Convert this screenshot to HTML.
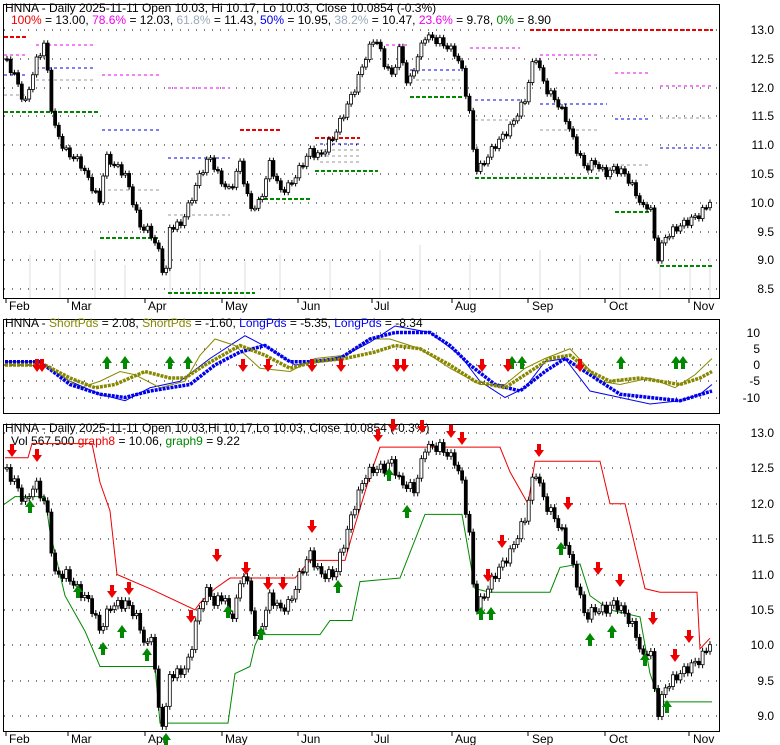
<!DOCTYPE html>
<html><head><meta charset="utf-8"><style>
body{margin:0;background:#fff;width:780px;height:745px;overflow:hidden}
svg{display:block;font-family:"Liberation Sans",sans-serif;font-size:12px}
.g{stroke:#000;stroke-width:1;stroke-dasharray:1,7;fill:none}
</style></head><body>
<svg id="s" width="780" height="745" viewBox="0 0 780 745">
<defs>
<path id="ua" d="M0 0l-5 7h3v6h4v-6h3z" fill="#080"/>
<path id="da" d="M0 0l-5 -7h3v-6h4v6h3z" fill="#e00"/>
</defs>
<rect width="780" height="745" fill="#fff"/>
<rect x="3.5" y="4.5" width="716" height="294" fill="none" stroke="#000"/>
<rect x="3.5" y="319.5" width="716" height="94" fill="none" stroke="#000"/>
<rect x="3.5" y="424.5" width="716" height="307" fill="none" stroke="#000"/>
<g class="g">
<path d="M4 30H719M4 59H719M4 88H719M4 116H719M4 145H719M4 174H719M4 203H719M4 232H719M4 260H719M4 289H719"/>
<path d="M4 333H719M4 349H719M4 365H719M4 381H719M4 398H719"/>
<path d="M4 433H719M4 468H719M4 504H719M4 539H719M4 575H719M4 610H719M4 645H719M4 681H719M4 716H719"/>
</g>
<g stroke="#eee" stroke-width="2">
<path d="M30 298V255M60 298V262M95 298V250M125 298V265M170 298V240M200 298V258M245 298V262M280 298V255M330 298V260M380 298V250M420 298V245M470 298V255M500 298V262M540 298V250M580 298V255M620 298V262M660 298V240M690 298V265M710 298V258"/>
</g>
<g stroke-width="2" stroke-dasharray="4,2" fill="none">
<path d="M4 37H28M240 130H280M315 138H360M530 30H713" stroke="#e00"/>
<path d="M4 112H98M100 238H158M168 293H255M258 199H310M315 171H378M410 97H463M475 178H600M615 212H650M660 266H713" stroke="#080"/>
</g>
<g stroke-width="1" stroke-dasharray="3,3" fill="none">
<path d="M4 55H25M36 45H95M102 75H160M168 88H230M380 45H410M470 48H520M540 55H600M615 73H650M660 86H713" stroke="#e0e"/>
<path d="M4 75H25M36 68H95M102 130H160M168 158H230M320 144H360M410 70H460M475 100H520M540 104H607M615 119H650M660 148H713" stroke="#00e"/>
<path d="M4 95H25M36 80H95M102 190H160M168 215H230M320 150H360M320 156H360M320 162H360M410 80H460M475 120H520M540 130H600M615 165H650M660 118H713" stroke="#999"/>
</g>
<g id="top"></g>
<g fill="#000">
<text x="5" y="12">HNNA - Daily 2025-11-11 Open 10.03, Hi 10.17, Lo 10.03, Close 10.0854 (-0.3%)</text>
<text x="11" y="24"><tspan fill="#e00">100%</tspan> = 13.00, <tspan fill="#e0e">78.6%</tspan> = 12.03, <tspan fill="#9ab">61.8%</tspan> = 11.43, <tspan fill="#00e">50%</tspan> = 10.95, <tspan fill="#9ab">38.2%</tspan> = 10.47, <tspan fill="#e0e">23.6%</tspan> = 9.78, <tspan fill="#080">0%</tspan> = 8.90</text>
<g text-anchor="end">
<text x="774" y="34">13.0</text><text x="774" y="63">12.5</text><text x="774" y="92">12.0</text><text x="774" y="120">11.5</text><text x="774" y="149">11.0</text><text x="774" y="178">10.5</text><text x="774" y="207">10.0</text><text x="774" y="236">9.5</text><text x="774" y="264">9.0</text><text x="774" y="293">8.5</text>
<text x="760" y="337">10</text><text x="760" y="353">5</text><text x="760" y="369">0</text><text x="760" y="385">-5</text><text x="760" y="402">-10</text>
<text x="774" y="437">13.0</text><text x="774" y="472">12.5</text><text x="774" y="508">12.0</text><text x="774" y="543">11.5</text><text x="774" y="579">11.0</text><text x="774" y="614">10.5</text><text x="774" y="649">10.0</text><text x="774" y="685">9.5</text><text x="774" y="720">9.0</text>
</g>
<text x="9" y="310">Feb</text><text x="71" y="310">Mar</text><text x="148" y="310">Apr</text><text x="225" y="310">May</text><text x="301" y="310">Jun</text><text x="374" y="310">Jul</text><text x="455" y="310">Aug</text><text x="532" y="310">Sep</text><text x="609" y="310">Oct</text><text x="693" y="310">Nov</text>
<text x="9" y="743">Feb</text><text x="71" y="743">Mar</text><text x="148" y="743">Apr</text><text x="225" y="743">May</text><text x="301" y="743">Jun</text><text x="374" y="743">Jul</text><text x="455" y="743">Aug</text><text x="532" y="743">Sep</text><text x="609" y="743">Oct</text><text x="693" y="743">Nov</text>
<path d="M6 298v5M68 298v5M145 298v5M222 298v5M298 298v5M372 298v5M452 298v5M528 298v5M605 298v5M689 298v5M6 731v5M68 731v5M145 731v5M222 731v5M298 731v5M372 731v5M452 731v5M528 731v5M605 731v5M689 731v5" stroke="#000"/>
<text x="5" y="327">HNNA - <tspan fill="#880">ShortPds</tspan> = 2.08, <tspan fill="#880">ShortPds</tspan> = -1.60, <tspan fill="#00e">LongPds</tspan> = -5.35, <tspan fill="#00e">LongPds</tspan> = -8.34</text>
<text x="5" y="432">HNNA - Daily 2025-11-11 Open 10.03,Hi 10.17,Lo 10.03, Close 10.0854 (-0.3%)</text>
<text x="11" y="445">Vol 567,500 <tspan fill="#e00">graph8</tspan> = 10.06, <tspan fill="#080">graph9</tspan> = 9.22</text>
</g>
<g transform="translate(0,365) scale(1,-3.25)" fill="none">
<polyline vector-effect="non-scaling-stroke" stroke="#00e" stroke-width="1" points="5,1 40,1 70,-5 100,-9 125,-11 150,-7 180,-5 210,2 245,9 270,5 295,0 320,1 345,3 370,7 395,12 430,10 460,3 480,-5 505,-10 525,-7 545,1 565,2 590,-8 620,-10 650,-12 680,-11 700,-9 712,-6"/>
<polyline vector-effect="non-scaling-stroke" stroke="#880" stroke-width="1" points="5,1 40,1 60,-3 80,-7 100,-5 120,-2 135,-3 160,-7 185,-5 200,3 215,8 235,6 260,-1 290,-2 315,2 345,3 370,8 390,8 420,5 450,-1 480,-6 505,-6 525,-1 545,2 570,5 600,-5 620,-6 650,-4 675,-7 695,-3 712,2"/>
<polyline vector-effect="non-scaling-stroke" stroke="#00e" stroke-width="3.5" stroke-dasharray="3,1" points="5,1 40,1 70,-6 100,-9 125,-10 150,-8 170,-7 190,-6 215,0 240,4 265,6 290,1 310,1 340,2 370,8 395,10 430,10 450,6 470,0 495,-6 520,-8 545,-2 565,2 590,-3 620,-9 650,-10 680,-11 712,-8"/>
<polyline vector-effect="non-scaling-stroke" stroke="#880" stroke-width="3.5" stroke-dasharray="3,1" points="5,0 45,0 70,-4 95,-7 115,-6 145,-2 170,-4 185,-4 205,0 240,6 265,3 290,-1 315,1 345,2 375,4 395,6 420,5 450,0 475,-5 505,-7 530,-2 550,2 570,3 590,-2 610,-5 640,-4 660,-5 680,-6 700,-4 712,-2"/>
</g>
<g>
<use href="#ua" x="107" y="356"/><use href="#ua" x="125" y="356"/><use href="#ua" x="170" y="356"/><use href="#ua" x="188" y="356"/><use href="#ua" x="512" y="356"/><use href="#ua" x="522" y="356"/><use href="#ua" x="621" y="356"/><use href="#ua" x="676" y="356"/><use href="#ua" x="683" y="356"/>
<use href="#da" x="37" y="372"/><use href="#da" x="42" y="372"/><use href="#da" x="243" y="372"/><use href="#da" x="268" y="372"/><use href="#da" x="312" y="372"/><use href="#da" x="341" y="372"/><use href="#da" x="397" y="372"/><use href="#da" x="404" y="372"/><use href="#da" x="482" y="372"/><use href="#da" x="508" y="372"/><use href="#da" x="580" y="372"/>
</g>
<g transform="translate(0,1352.75) scale(1,-70.75)" fill="none">
<polyline vector-effect="non-scaling-stroke" stroke="#e00" stroke-width="1" points="5,12.65 28,12.65 32,12.85 92,12.85 100,12.3 110,11.9 117,11.0 150,10.8 195,10.5 200,10.6 215,10.8 230,10.95 295,10.95 310,11.2 345,11.2 355,11.7 370,12.4 380,12.8 500,12.8 510,12.45 528,12.0 535,12.6 600,12.6 610,12.0 625,12.0 635,11.4 645,10.8 660,10.75 697,10.75 700,9.95 710,10.1"/>
<polyline vector-effect="non-scaling-stroke" stroke="#080" stroke-width="1" points="5,12.0 15,12.1 45,12.1 50,11.6 55,11.3 65,10.7 85,10.2 100,9.7 155,9.7 160,8.9 228,8.9 235,9.6 250,9.7 255,10.0 260,10.15 320,10.15 330,10.35 352,10.35 360,10.9 400,10.95 425,11.85 462,11.85 475,10.8 490,10.75 550,10.75 560,11.1 580,11.15 590,10.7 610,10.5 640,10.4 650,9.6 660,9.2 712,9.2"/>
</g>
<g id="bot"></g>
<g>
<use href="#da" x="12" y="457"/><use href="#da" x="37" y="462"/><use href="#da" x="112" y="598"/><use href="#da" x="129" y="595"/><use href="#da" x="217" y="562"/><use href="#da" x="191" y="623"/><use href="#da" x="246" y="575"/><use href="#da" x="268" y="590"/><use href="#da" x="283" y="590"/><use href="#da" x="312" y="533"/><use href="#da" x="378" y="442"/><use href="#da" x="393" y="432"/><use href="#da" x="422" y="433"/><use href="#da" x="451" y="438"/><use href="#da" x="462" y="445"/><use href="#da" x="539" y="457"/><use href="#da" x="568" y="510"/><use href="#da" x="502" y="548"/><use href="#da" x="488" y="582"/><use href="#da" x="598" y="575"/><use href="#da" x="620" y="587"/><use href="#da" x="653" y="625"/><use href="#da" x="675" y="662"/><use href="#da" x="689" y="643"/>
<use href="#ua" x="30" y="500"/><use href="#ua" x="78" y="585"/><use href="#ua" x="103" y="642"/><use href="#ua" x="122" y="625"/><use href="#ua" x="147" y="648"/><use href="#ua" x="166" y="733"/><use href="#ua" x="228" y="605"/><use href="#ua" x="261" y="627"/><use href="#ua" x="338" y="580"/><use href="#ua" x="389" y="468"/><use href="#ua" x="407" y="505"/><use href="#ua" x="481" y="607"/><use href="#ua" x="491" y="607"/><use href="#ua" x="561" y="542"/><use href="#ua" x="590" y="633"/><use href="#ua" x="612" y="625"/><use href="#ua" x="645" y="653"/><use href="#ua" x="667" y="700"/>
</g>
</svg>
<script>
var PT=[[5,12.5],[15,12.2],[25,11.7],[35,12.4],[45,12.8],[50,11.8],[55,11.3],[65,10.9],[80,10.7],[100,10.0],[105,10.8],[125,10.5],[140,9.6],[150,9.5],[160,9.1],[165,8.6],[170,9.6],[180,9.6],[190,10.0],[200,10.5],[210,10.8],[220,10.4],[230,10.2],[240,10.7],[250,9.9],[260,10.0],[270,10.7],[280,10.2],[290,10.3],[300,10.6],[310,10.9],[320,10.8],[335,11.2],[345,11.6],[355,12.0],[365,12.5],[375,12.9],[385,12.4],[392,12.2],[400,12.7],[408,12.0],[415,12.4],[425,12.9],[440,12.8],[455,12.6],[462,12.3],[470,11.5],[475,10.6],[480,10.6],[495,11.0],[510,11.3],[525,11.8],[535,12.6],[545,12.0],[555,11.8],[565,11.5],[575,11.0],[585,10.6],[595,10.7],[605,10.5],[615,10.6],[625,10.5],[635,10.2],[643,9.9],[650,10.0],[657,9.0],[665,9.4],[672,9.5],[680,9.6],[690,9.7],[700,9.8],[705,9.9],[712,10.1]];
var PB=[[5,12.5],[15,12.3],[25,12.0],[35,12.3],[45,12.0],[50,11.7],[53,11.0],[67,11.0],[77,10.8],[90,10.6],[100,10.2],[110,10.55],[125,10.6],[135,10.45],[147,9.95],[152,10.2],[157,9.3],[160,8.9],[165,8.95],[170,9.6],[180,9.6],[190,9.8],[195,10.3],[200,10.5],[205,10.8],[215,10.6],[225,10.7],[230,10.3],[245,11.1],[250,10.6],[257,10.0],[262,10.3],[270,10.7],[280,10.5],[290,10.6],[300,11.0],[310,11.3],[320,11.0],[335,11.0],[345,11.5],[355,12.0],[365,12.4],[375,12.5],[385,12.5],[392,12.6],[400,12.3],[415,12.2],[425,12.8],[440,12.8],[455,12.6],[462,12.3],[470,11.5],[475,10.5],[480,10.6],[495,11.0],[510,11.3],[525,11.8],[535,12.5],[545,12.0],[555,11.8],[565,11.5],[575,11.0],[585,10.4],[595,10.5],[605,10.5],[615,10.6],[625,10.45],[635,10.2],[643,9.8],[650,10.0],[657,9.0],[665,9.4],[672,9.5],[680,9.6],[690,9.7],[700,9.8],[705,9.9],[712,10.1]];
function f(P,x){for(var i=1;i<P.length;i++){if(x<=P[i][0]){var a=P[i-1],b=P[i];return a[1]+(b[1]-a[1])*(x-a[0])/(b[0]-a[0]);}}return P[P.length-1][1];}
var NS="http://www.w3.org/2000/svg";
function draw(id,P,y0,k){var g=document.getElementById(id);var prev=f(P,5),i=0;
for(var x=7;x<=712;x+=3.7){i++;var c=f(P,x)+0.07*Math.sin(i*2.3);var o=prev;var hi=Math.max(o,c)+0.05,lo=Math.min(o,c)-0.05;
var yc=y0+(13-c)*k,yo=y0+(13-o)*k;
var l=document.createElementNS(NS,"line");l.setAttribute("x1",x);l.setAttribute("x2",x);l.setAttribute("y1",y0+(13-hi)*k);l.setAttribute("y2",y0+(13-lo)*k);l.setAttribute("stroke","#000");g.appendChild(l);
var r=document.createElementNS(NS,"rect");var t=Math.min(yc,yo),h=Math.max(Math.abs(yc-yo),1.5);
r.setAttribute("x",x-1.5);r.setAttribute("y",t);r.setAttribute("width",3);r.setAttribute("height",h);
r.setAttribute("fill",c<o?"#000":"#fff");r.setAttribute("stroke","#000");r.setAttribute("stroke-width","0.8");g.appendChild(r);prev=c;}}
draw("top",PT,30,57.6);draw("bot",PB,433,70.75);
</script>
</body></html>
